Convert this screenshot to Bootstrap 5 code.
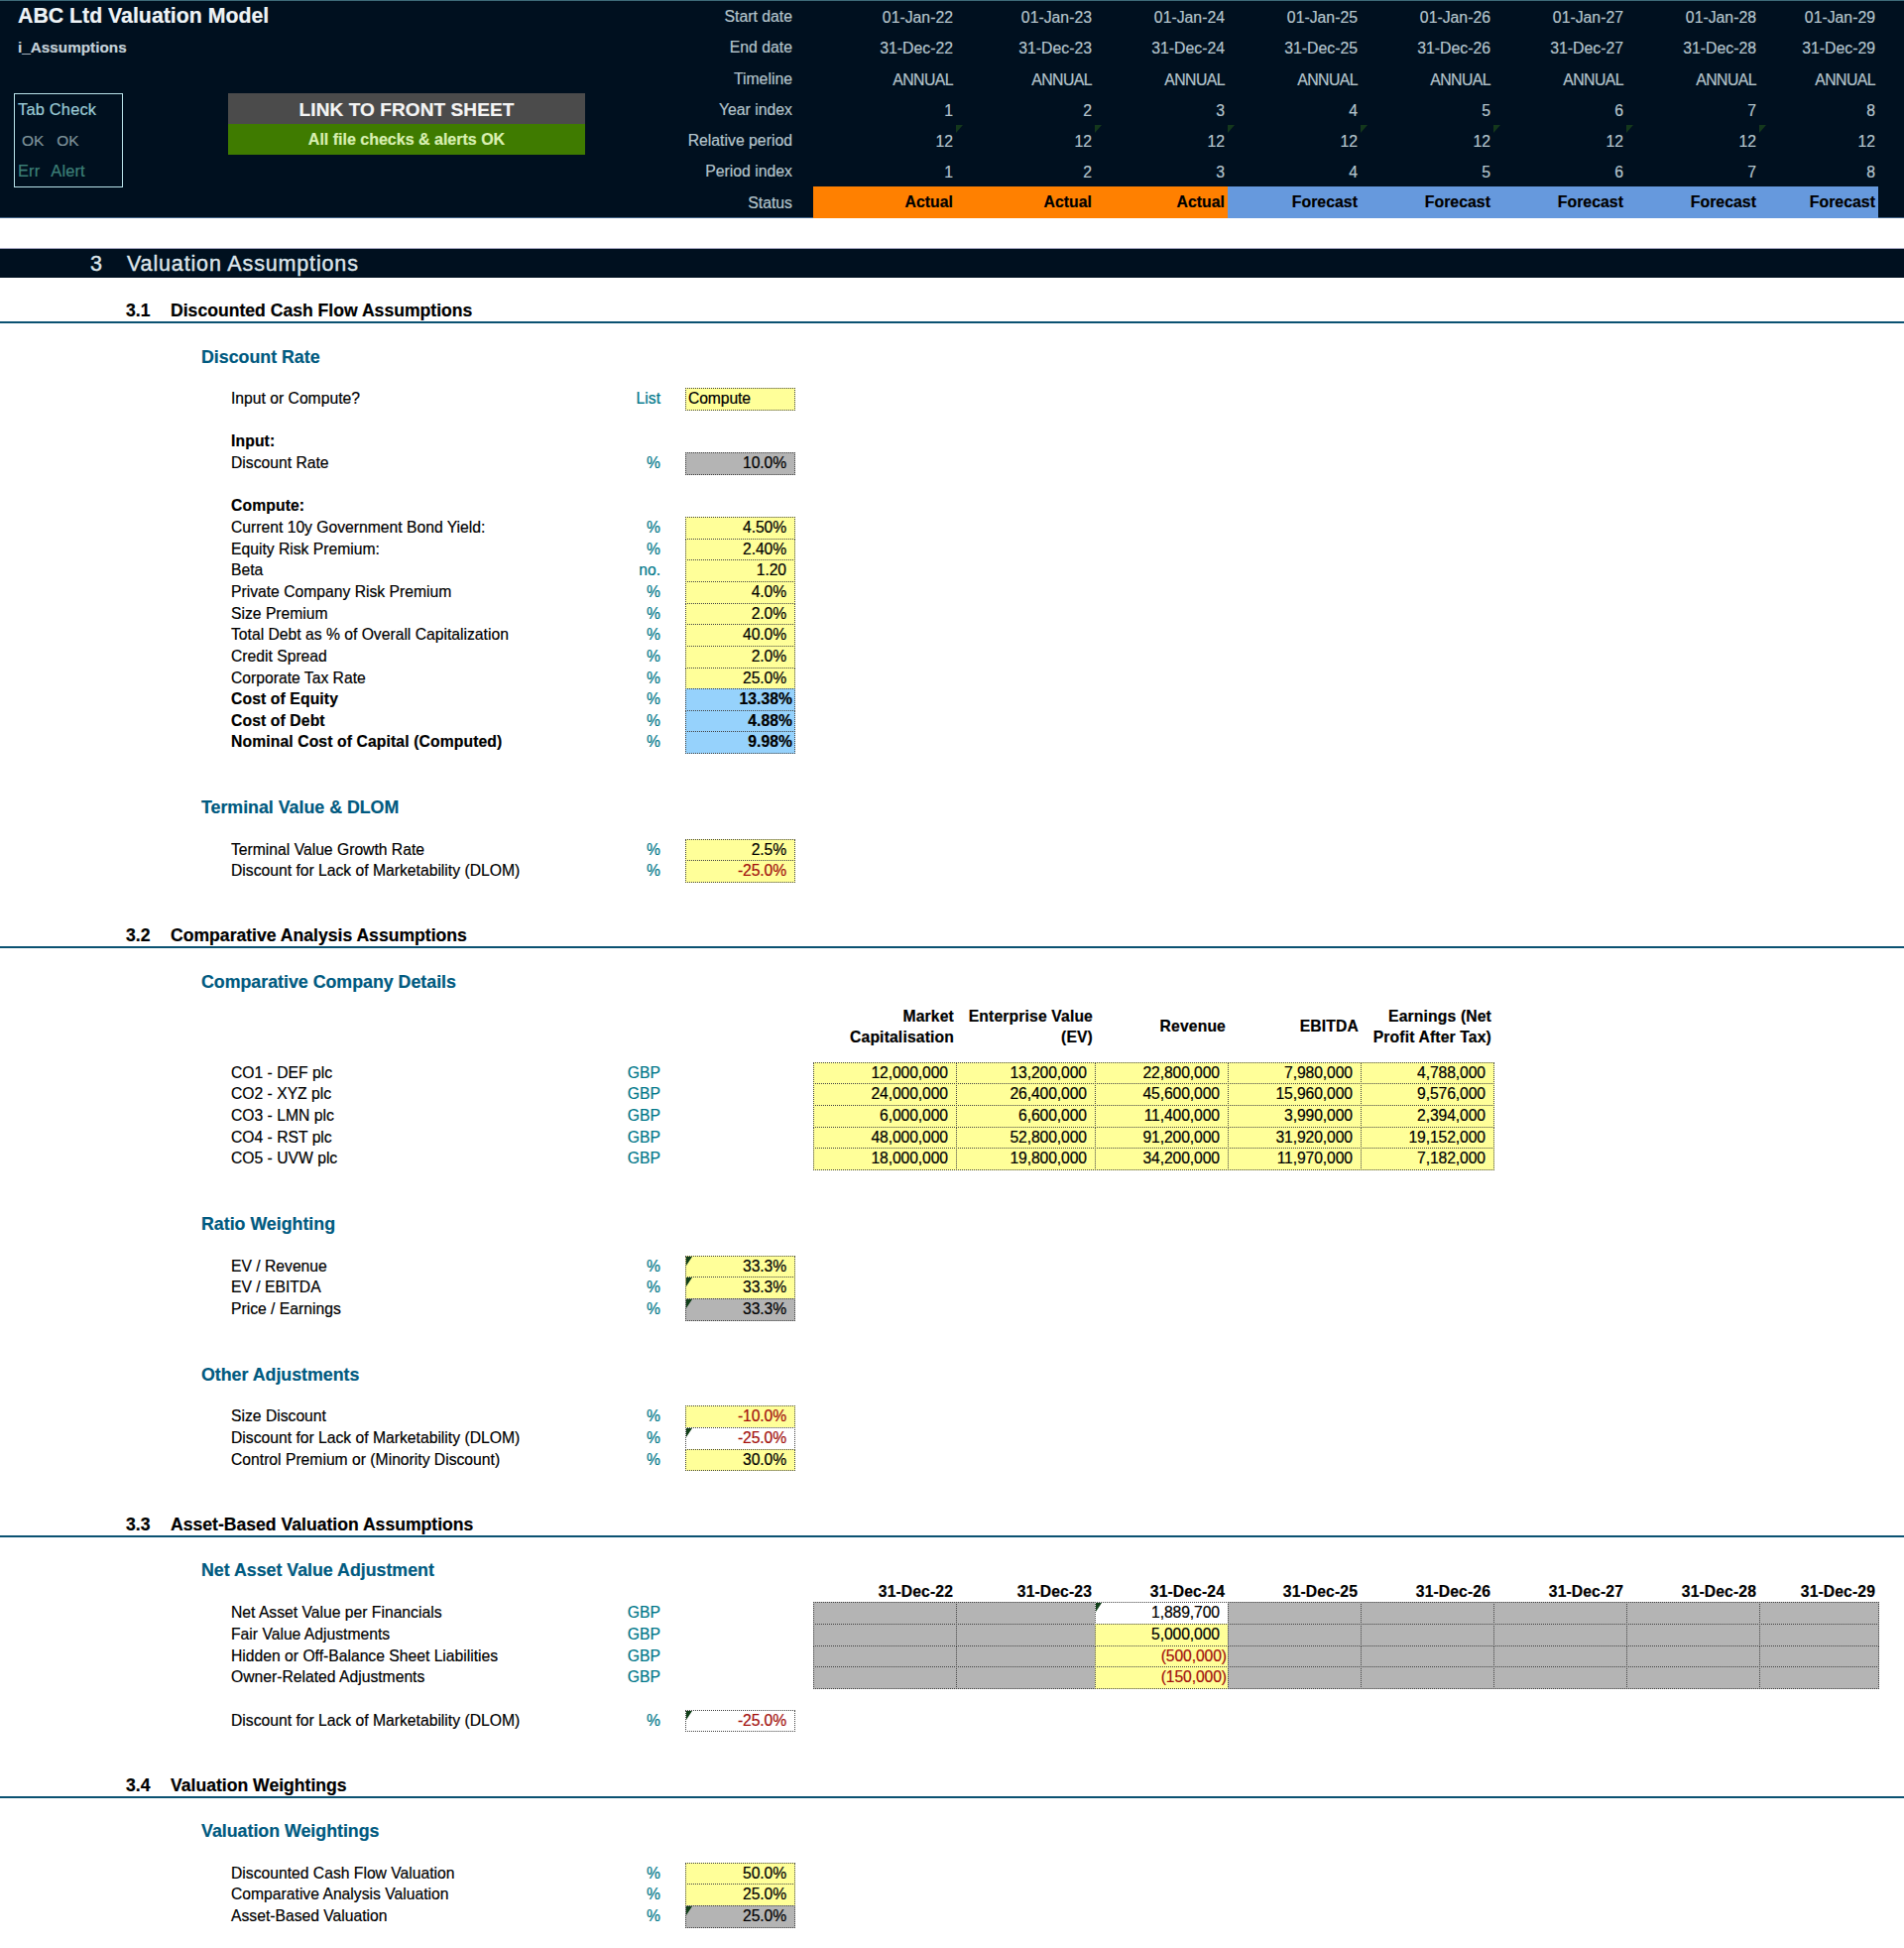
<!DOCTYPE html>
<html lang="en">
<head>
<meta charset="utf-8">
<title>ABC Ltd Valuation Model</title>
<link href="https://cdn.jsdelivr.net/npm/bootstrap@5.3.0/dist/css/bootstrap.min.css" rel="stylesheet">
<style>
:root{--navy:#00101f;--teal:#00788a;--head:#005a80;--cell:#444}
html,body{background:#fff}
body{font-family:"Liberation Sans",Arial,sans-serif;font-size:15.7px;line-height:21.66px;color:#000;width:1920px;height:1964px;overflow:hidden;-webkit-text-stroke:.2px}
.hdr{background:var(--navy);height:220px;border-top:1px solid #3d6a78;border-bottom:1px solid #3f6285;color:#b4c4cc;font-size:15.8px}
.hdr-left{width:660px}
.title{font-size:21.3px;line-height:31px;padding-left:18px;color:#eef3f6}
.sub{font-size:15.3px;line-height:31px;padding-left:18px;color:#c4d1d9;font-weight:700}
.tab{width:110px;height:95px;margin:31px 0 0 14px;border:1px solid #b9e3ea;padding:0 3px;font-size:16.4px;line-height:31px}
.tab .tc{color:#9ccbd6;letter-spacing:.2px}
.tab .ok{color:#7e929a;padding-left:4px;column-gap:13px;font-size:15.4px}
.tab .er{color:#3d8078;column-gap:11px;letter-spacing:.15px}
.link{width:360px;margin:31px 0 0 106px}
.link1{height:31px;background:#4b4b4b;color:#f4f4f4;font-weight:700;font-size:19px;line-height:33px;letter-spacing:.1px}
.link2{height:31px;background:#3f7b00;color:#d8efb0;font-weight:700;font-size:16px;line-height:31px}
.hgrid{display:grid;grid-template-columns:139px 21px 144px 140px 134px 134px 134px 134px 134px 120px;grid-auto-rows:31.25px;align-items:center;line-height:33px}
.hl{grid-column:1;text-align:right}
.hv{grid-column:auto;text-align:right;padding-right:3px;position:relative;height:31.25px}
.hv1{grid-column:3}
.ann{letter-spacing:-.55px}
.st{font-weight:700;color:#000;line-height:31px;height:32px;letter-spacing:.05px}
.st-a{background:#ff8000}
.st-f{background:#6699dd}
.mk::before{content:"";position:absolute;left:0;top:0;border-style:solid;border-width:0 7px 8px 0;border-color:transparent #14381c transparent transparent;transform:scaleX(-1)}
.bar{background:var(--navy);height:30px;margin-top:30px;border-top:1px solid #a3a3bd;color:#dce4ea;font-size:21.5px;line-height:31px;letter-spacing:.85px;-webkit-text-stroke:.4px}
.bar span:first-child{width:128px;padding-left:91px}
.sec{height:24px;border-bottom:2px solid #0b5272;font-weight:700;font-size:17.6px;line-height:23px}
.sec span:first-child{width:172px;padding-left:127px}
.s1{margin-top:22px}
.headg{color:var(--head);font-weight:700;font-size:17.8px;padding-left:203px;height:21.66px;line-height:24px}
.blank{height:21.66px}
.r{display:grid;grid-template-columns:233px 327px 106px 25px 111px 18px 144px 140px 134px 134px 134px 134px 134px 120px;height:21.66px}
.l{grid-column:2;white-space:nowrap}
.l.fw-bold{letter-spacing:.12px}
.u{grid-column:3;text-align:right;color:var(--teal)}
.i{grid-column:5}
.t1{grid-column:7}
.c{position:relative;text-align:right;padding-right:8px;border:1px dotted var(--cell);margin:0 -1px -1px 0;line-height:19.6px;letter-spacing:-.1px;z-index:1}
.i.c{padding-right:8px;margin-right:0}
.y{background:#ffff99}
.g{background:#b4b4b4}
.i.b{background:#96d2fc;font-weight:700;padding-right:2px;letter-spacing:.05px}
.w{background:#fff}
.neg{color:#a3100c}
.c.br{padding-right:1px}
.i.left{text-align:left;padding-left:2px}
.tri::before{content:"";position:absolute;left:0;top:0;border-style:solid;border-width:9px 6px 0 0;border-color:#12401a transparent transparent transparent}
.r.colhead{height:71.1px;align-items:center;font-weight:700;line-height:21.66px;letter-spacing:.15px}
.colhead div{text-align:right;padding-right:2px}
.r.dates{height:22.6px;line-height:24px}
.dates div{text-align:right;padding-right:3px;font-weight:700;letter-spacing:.12px}
</style>
</head>
<body>
<header class="hdr d-flex">
  <div class="hdr-left">
    <div class="title fw-bold">ABC Ltd Valuation Model</div>
    <div class="sub">i_Assumptions</div>
    <div class="d-flex">
      <div class="tab">
        <div class="tc">Tab Check</div>
        <div class="ok d-flex"><span>OK</span><span>OK</span></div>
        <div class="er d-flex"><span>Err</span><span>Alert</span></div>
      </div>
      <div class="link text-center">
        <div class="link1">LINK TO FRONT SHEET</div>
        <div class="link2">All file checks &amp; alerts OK</div>
      </div>
    </div>
  </div>
  <div class="hgrid">
    <div class="hl">Start date</div><div class="hv hv1">01-Jan-22</div><div class="hv">01-Jan-23</div><div class="hv">01-Jan-24</div><div class="hv">01-Jan-25</div><div class="hv">01-Jan-26</div><div class="hv">01-Jan-27</div><div class="hv">01-Jan-28</div><div class="hv">01-Jan-29</div>
    <div class="hl">End date</div><div class="hv hv1">31-Dec-22</div><div class="hv">31-Dec-23</div><div class="hv">31-Dec-24</div><div class="hv">31-Dec-25</div><div class="hv">31-Dec-26</div><div class="hv">31-Dec-27</div><div class="hv">31-Dec-28</div><div class="hv">31-Dec-29</div>
    <div class="hl">Timeline</div><div class="hv hv1 ann">ANNUAL</div><div class="hv ann">ANNUAL</div><div class="hv ann">ANNUAL</div><div class="hv ann">ANNUAL</div><div class="hv ann">ANNUAL</div><div class="hv ann">ANNUAL</div><div class="hv ann">ANNUAL</div><div class="hv ann">ANNUAL</div>
    <div class="hl">Year index</div><div class="hv hv1">1</div><div class="hv">2</div><div class="hv">3</div><div class="hv">4</div><div class="hv">5</div><div class="hv">6</div><div class="hv">7</div><div class="hv">8</div>
    <div class="hl">Relative period</div><div class="hv hv1">12</div><div class="hv mk">12</div><div class="hv mk">12</div><div class="hv mk">12</div><div class="hv mk">12</div><div class="hv mk">12</div><div class="hv mk">12</div><div class="hv mk">12</div>
    <div class="hl">Period index</div><div class="hv hv1">1</div><div class="hv">2</div><div class="hv">3</div><div class="hv">4</div><div class="hv">5</div><div class="hv">6</div><div class="hv">7</div><div class="hv">8</div>
    <div class="hl">Status</div><div class="hv hv1 st st-a">Actual</div><div class="hv st st-a">Actual</div><div class="hv st st-a">Actual</div><div class="hv st st-f">Forecast</div><div class="hv st st-f">Forecast</div><div class="hv st st-f">Forecast</div><div class="hv st st-f">Forecast</div><div class="hv st st-f">Forecast</div>
  </div>
</header>

<div class="bar d-flex"><span>3</span><span>Valuation Assumptions</span></div>

<div class="sec s1 d-flex"><span>3.1</span><span>Discounted Cash Flow Assumptions</span></div>
<div class="blank"></div>
<div class="headg">Discount Rate</div>
<div class="blank"></div>
<div class="r"><div class="l">Input or Compute?</div><div class="u">List</div><div class="i c y left">Compute</div></div>
<div class="blank"></div>
<div class="r"><div class="l fw-bold">Input:</div></div>
<div class="r"><div class="l">Discount Rate</div><div class="u">%</div><div class="i c g">10.0%</div></div>
<div class="blank"></div>
<div class="r"><div class="l fw-bold">Compute:</div></div>
<div class="r"><div class="l">Current 10y Government Bond Yield:</div><div class="u">%</div><div class="i c y">4.50%</div></div>
<div class="r"><div class="l">Equity Risk Premium:</div><div class="u">%</div><div class="i c y">2.40%</div></div>
<div class="r"><div class="l">Beta</div><div class="u">no.</div><div class="i c y">1.20</div></div>
<div class="r"><div class="l">Private Company Risk Premium</div><div class="u">%</div><div class="i c y">4.0%</div></div>
<div class="r"><div class="l">Size Premium</div><div class="u">%</div><div class="i c y">2.0%</div></div>
<div class="r"><div class="l">Total Debt as % of Overall Capitalization</div><div class="u">%</div><div class="i c y">40.0%</div></div>
<div class="r"><div class="l">Credit Spread</div><div class="u">%</div><div class="i c y">2.0%</div></div>
<div class="r"><div class="l">Corporate Tax Rate</div><div class="u">%</div><div class="i c y">25.0%</div></div>
<div class="r"><div class="l fw-bold">Cost of Equity</div><div class="u">%</div><div class="i c b">13.38%</div></div>
<div class="r"><div class="l fw-bold">Cost of Debt</div><div class="u">%</div><div class="i c b">4.88%</div></div>
<div class="r"><div class="l fw-bold">Nominal Cost of Capital (Computed)</div><div class="u">%</div><div class="i c b">9.98%</div></div>
<div class="blank"></div>
<div class="blank"></div>
<div class="headg">Terminal Value &amp; DLOM</div>
<div class="blank"></div>
<div class="r"><div class="l">Terminal Value Growth Rate</div><div class="u">%</div><div class="i c y">2.5%</div></div>
<div class="r"><div class="l">Discount for Lack of Marketability (DLOM)</div><div class="u">%</div><div class="i c y neg">-25.0%</div></div>
<div class="blank"></div>
<div class="blank"></div>

<div class="sec d-flex"><span>3.2</span><span>Comparative Analysis Assumptions</span></div>
<div class="blank"></div>
<div class="headg">Comparative Company Details</div>
<div class="r colhead"><div class="t1">Market<br>Capitalisation</div><div>Enterprise Value<br>(EV)</div><div>Revenue</div><div>EBITDA</div><div>Earnings (Net<br>Profit After Tax)</div></div>
<div class="r"><div class="l">CO1 - DEF plc</div><div class="u">GBP</div><div class="t1 c y">12,000,000</div><div class="c y">13,200,000</div><div class="c y">22,800,000</div><div class="c y">7,980,000</div><div class="c y">4,788,000</div></div>
<div class="r"><div class="l">CO2 - XYZ plc</div><div class="u">GBP</div><div class="t1 c y">24,000,000</div><div class="c y">26,400,000</div><div class="c y">45,600,000</div><div class="c y">15,960,000</div><div class="c y">9,576,000</div></div>
<div class="r"><div class="l">CO3 - LMN plc</div><div class="u">GBP</div><div class="t1 c y">6,000,000</div><div class="c y">6,600,000</div><div class="c y">11,400,000</div><div class="c y">3,990,000</div><div class="c y">2,394,000</div></div>
<div class="r"><div class="l">CO4 - RST plc</div><div class="u">GBP</div><div class="t1 c y">48,000,000</div><div class="c y">52,800,000</div><div class="c y">91,200,000</div><div class="c y">31,920,000</div><div class="c y">19,152,000</div></div>
<div class="r"><div class="l">CO5 - UVW plc</div><div class="u">GBP</div><div class="t1 c y">18,000,000</div><div class="c y">19,800,000</div><div class="c y">34,200,000</div><div class="c y">11,970,000</div><div class="c y">7,182,000</div></div>
<div class="blank"></div>
<div class="blank"></div>
<div class="headg">Ratio Weighting</div>
<div class="blank"></div>
<div class="r"><div class="l">EV / Revenue</div><div class="u">%</div><div class="i c y tri">33.3%</div></div>
<div class="r"><div class="l">EV / EBITDA</div><div class="u">%</div><div class="i c y tri">33.3%</div></div>
<div class="r"><div class="l">Price / Earnings</div><div class="u">%</div><div class="i c g tri">33.3%</div></div>
<div class="blank"></div>
<div class="blank"></div>
<div class="headg">Other Adjustments</div>
<div class="blank"></div>
<div class="r"><div class="l">Size Discount</div><div class="u">%</div><div class="i c y neg">-10.0%</div></div>
<div class="r"><div class="l">Discount for Lack of Marketability (DLOM)</div><div class="u">%</div><div class="i c w neg tri">-25.0%</div></div>
<div class="r"><div class="l">Control Premium or (Minority Discount)</div><div class="u">%</div><div class="i c y">30.0%</div></div>
<div class="blank"></div>
<div class="blank"></div>

<div class="sec d-flex"><span>3.3</span><span>Asset-Based Valuation Assumptions</span></div>
<div class="blank"></div>
<div class="headg">Net Asset Value Adjustment</div>
<div class="r dates"><div class="t1">31-Dec-22</div><div>31-Dec-23</div><div>31-Dec-24</div><div>31-Dec-25</div><div>31-Dec-26</div><div>31-Dec-27</div><div>31-Dec-28</div><div>31-Dec-29</div></div>
<div class="r"><div class="l">Net Asset Value per Financials</div><div class="u">GBP</div><div class="t1 c g"></div><div class="c g"></div><div class="c w tri">1,889,700</div><div class="c g"></div><div class="c g"></div><div class="c g"></div><div class="c g"></div><div class="c g"></div></div>
<div class="r"><div class="l">Fair Value Adjustments</div><div class="u">GBP</div><div class="t1 c g"></div><div class="c g"></div><div class="c y">5,000,000</div><div class="c g"></div><div class="c g"></div><div class="c g"></div><div class="c g"></div><div class="c g"></div></div>
<div class="r"><div class="l">Hidden or Off-Balance Sheet Liabilities</div><div class="u">GBP</div><div class="t1 c g"></div><div class="c g"></div><div class="c y neg br">(500,000)</div><div class="c g"></div><div class="c g"></div><div class="c g"></div><div class="c g"></div><div class="c g"></div></div>
<div class="r"><div class="l">Owner-Related Adjustments</div><div class="u">GBP</div><div class="t1 c g"></div><div class="c g"></div><div class="c y neg br">(150,000)</div><div class="c g"></div><div class="c g"></div><div class="c g"></div><div class="c g"></div><div class="c g"></div></div>
<div class="blank"></div>
<div class="r"><div class="l">Discount for Lack of Marketability (DLOM)</div><div class="u">%</div><div class="i c w neg tri">-25.0%</div></div>
<div class="blank"></div>
<div class="blank"></div>

<div class="sec d-flex"><span>3.4</span><span>Valuation Weightings</span></div>
<div class="blank"></div>
<div class="headg">Valuation Weightings</div>
<div class="blank"></div>
<div class="r"><div class="l">Discounted Cash Flow Valuation</div><div class="u">%</div><div class="i c y">50.0%</div></div>
<div class="r"><div class="l">Comparative Analysis Valuation</div><div class="u">%</div><div class="i c y">25.0%</div></div>
<div class="r"><div class="l">Asset-Based Valuation</div><div class="u">%</div><div class="i c g tri">25.0%</div></div>
</body>
</html>
